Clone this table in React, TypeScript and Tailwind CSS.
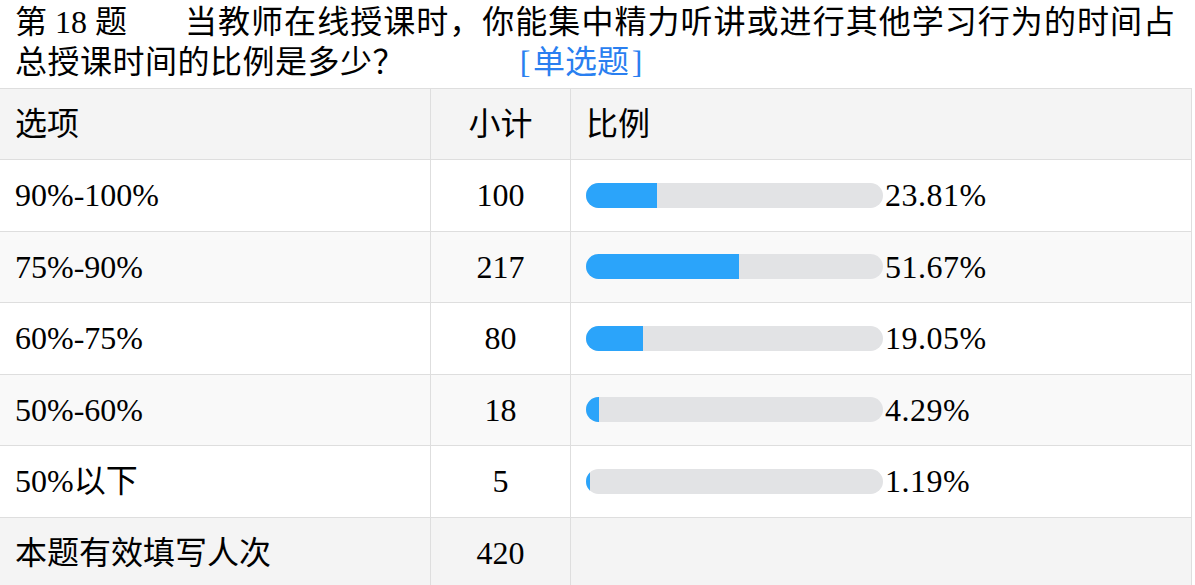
import React from "react";

const rows = [
  { label: "90%-100%", count: 100, pct: 23.81 },
  { label: "75%-90%", count: 217, pct: 51.67 },
  { label: "60%-75%", count: 80, pct: 19.05 },
  { label: "50%-60%", count: 18, pct: 4.29 },
  { label: "50%以下", count: 5, pct: 1.19 },
];

const font = {
  fontFamily: '"Liberation Serif", "Noto Sans CJK SC", serif',
};

export default function App() {
  return (
    <div
      className="w-[1195px] h-[585px] overflow-hidden bg-white text-black text-[32px] leading-[40px]"
      style={font}
    >
      <div className="pt-[2px] pb-[6px]">
        <div className="flex pl-[15px] pr-[20px]">
          <span className="w-[170px] shrink-0 whitespace-pre">第 18 题</span>
          <span className="flex-1 text-justify [text-align-last:justify] whitespace-nowrap overflow-hidden">
            当教师在线授课时，你能集中精力听讲或进行其他学习行为的时间占
          </span>
        </div>
        <div className="flex pl-[15px]">
          <span className="tracking-[0.5px]">总授课时间的比例是多少？</span>
          <span className="ml-[112px] text-[#2a7ff0] flex">
            <span className="inline-block w-[16px] text-center">[</span>
            <span>单选题</span>
            <span className="inline-block w-[16px] text-center">]</span>
          </span>
        </div>
      </div>
      <div className="w-[1192px] border-t border-r border-[#dedede]">
        <div className="flex h-[71px] bg-[#f4f4f4] border-b border-[#dedede]">
          <div className="w-[431px] border-r border-[#dedede] flex items-center pl-[15px]">选项</div>
          <div className="w-[140px] border-r border-[#dedede] flex items-center justify-center">小计</div>
          <div className="flex-1 flex items-center pl-[15px]">比例</div>
        </div>
        {rows.map((r, i) => (
          <div
            key={r.label}
            className={`flex h-[71.5px] border-b border-[#dedede] ${i % 2 === 1 ? "bg-[#f9f9f9]" : "bg-white"}`}
          >
            <div className="w-[431px] border-r border-[#dedede] flex items-center pl-[15px]">{r.label}</div>
            <div className="w-[140px] border-r border-[#dedede] flex items-center justify-center">{r.count}</div>
            <div className="flex-1 flex items-center pl-[15px]">
              <div className="w-[297px] h-[25px] rounded-full bg-[#e2e3e5] overflow-hidden">
                <div className="h-full bg-[#2ba4fa]" style={{ width: `${r.pct}%` }} />
              </div>
              <span className="ml-[2px] tracking-[0.5px]">{r.pct.toFixed(2)}%</span>
            </div>
          </div>
        ))}
        <div className="flex h-[71.5px] bg-[#f4f4f4] border-b border-[#dedede]">
          <div className="w-[431px] border-r border-[#dedede] flex items-center pl-[15px]">本题有效填写人次</div>
          <div className="w-[140px] border-r border-[#dedede] flex items-center justify-center">420</div>
          <div className="flex-1" />
        </div>
      </div>
    </div>
  );
}
